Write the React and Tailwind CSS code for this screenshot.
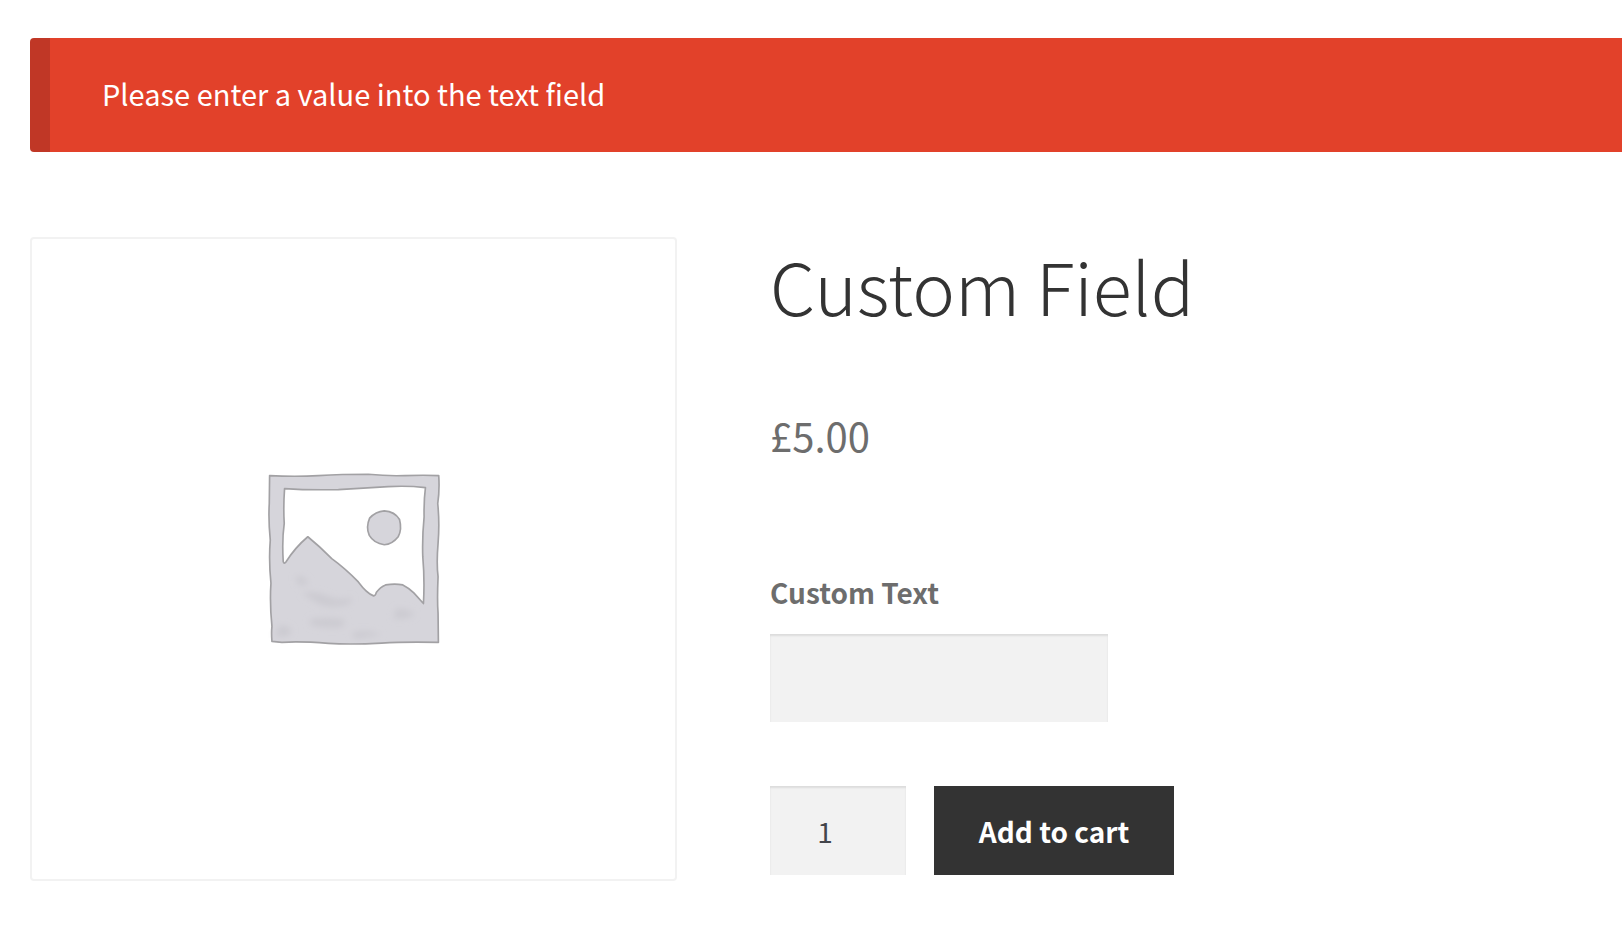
import { useState } from "react"

function PlaceholderImage() {
  return (
    <svg viewBox="-4 -4 600 600" className="w-[31%]" role="img" aria-label="Awaiting product image">
      <defs>
        <filter id="wash" x="-10%" y="-10%" width="120%" height="120%">
          <feGaussianBlur stdDeviation="10" />
        </filter>
      </defs>
      <path
        d="M43 46 Q120 50 190 46 Q260 42 340 42 Q400 48 450 46 Q510 44 552 46 Q555 90 549 130 Q555 190 550 250 Q545 310 550 350 Q547 420 550 460 L551 548 Q450 546 380 550 Q290 555 220 551 Q130 544 80 548 L50 545 Q48 520 50 500 Q43 430 47 370 Q40 300 45 240 Q39 180 42 130 Z M88 85 Q84 140 87 190 Q80 240 84 305 Q87 313 92 306 Q120 262 158 230 Q195 260 230 296 Q270 325 310 366 Q335 400 356 408 Q362 407 364 398 Q376 381 392 375 Q420 370 444 375 Q462 384 477 399 L506 431 Q510 360 504 290 Q502 230 508 170 Q507 120 512 82 Q460 76 400 79 Q320 84 250 88 Q160 90 88 85 Z"
        fill="#d6d5db"
        fillRule="evenodd"
        stroke="#a2a1a4"
        strokeWidth="5"
        strokeLinejoin="round"
      />
      <path
        d="M388 152 Q420 154 434 178 Q442 208 430 230 Q412 253 388 254 Q357 250 343 226 Q332 202 344 174 Q362 154 388 152 Z"
        fill="#d6d5db"
        stroke="#a2a1a4"
        strokeWidth="5"
      />
      <g fill="#cccbd1" filter="url(#wash)">
        <path d="M140 400 Q180 390 225 412 Q260 425 290 412 L285 432 Q230 450 190 432 Z" />
        <path d="M165 478 Q220 470 270 480 L262 502 Q210 508 165 496 Z" />
        <path d="M425 445 Q470 450 480 465 Q450 482 415 475 Z" />
        <path d="M70 500 Q90 490 110 512 L98 530 L60 530 Z" />
        <path d="M290 520 Q330 505 380 525 L300 538 Z" />
        <path d="M120 350 Q150 345 160 372 L130 376 Z" />
      </g>
    </svg>
  )
}

export default function App() {
  const [customText, setCustomText] = useState("")
  const [quantity, setQuantity] = useState("1")

  return (
    <div className="min-h-screen overflow-x-hidden bg-white pt-[38px] pl-[30px] font-['Noto_Sans_CJK_SC','Noto_Sans',sans-serif] text-[#6d6d6d]">
      {/* Error notice */}
      <div
        role="alert"
        className="flex h-[114px] items-center rounded-l-sm border-l-20 border-[#c03726] bg-[#e2412a] pb-0.5 pl-[52px] text-[29px] text-white"
      >
        Please enter a value into the text field
      </div>

      {/* Product */}
      <div className="mt-[85px] grid grid-cols-[60fr_79fr] items-start gap-[93px] pb-10">
        <div className="flex aspect-[200/199] items-center justify-center rounded-sm border-2 border-[#f2f2f2]">
          <PlaceholderImage />
        </div>

        <div>
          <h1 className="mt-1 text-7xl leading-[88px] font-light text-[#333333]">Custom Field</h1>
          <p className="mt-[76px] text-[40px] leading-[60px]">£5.00</p>

          <form className="mt-[107px]" onSubmit={(e) => e.preventDefault()}>
            <label htmlFor="custom-text" className="block text-[28px] leading-10 font-bold">
              Custom Text
            </label>
            <input
              id="custom-text"
              type="text"
              value={customText}
              onChange={(e) => setCustomText(e.target.value)}
              className="mt-[22px] block h-[88px] w-[338px] bg-[#f2f2f2] px-6 text-[28px] text-[#43454b] shadow-[inset_0_2px_2px_#dcdcdc] outline-none"
            />

            <div className="mt-16 flex gap-7">
              <input
                type="text"
                inputMode="numeric"
                aria-label="Quantity"
                value={quantity}
                onChange={(e) => setQuantity(e.target.value)}
                className="h-[89px] w-[136px] bg-[#f2f2f2] pr-[26px] text-center text-[28px] text-[#43454b] shadow-[inset_0_2px_2px_#dcdcdc] outline-none"
              />
              <button type="submit" className="h-[89px] w-[240px] bg-[#333333] text-[28px] font-bold text-white">
                Add to cart
              </button>
            </div>
          </form>
        </div>
      </div>
    </div>
  )
}
